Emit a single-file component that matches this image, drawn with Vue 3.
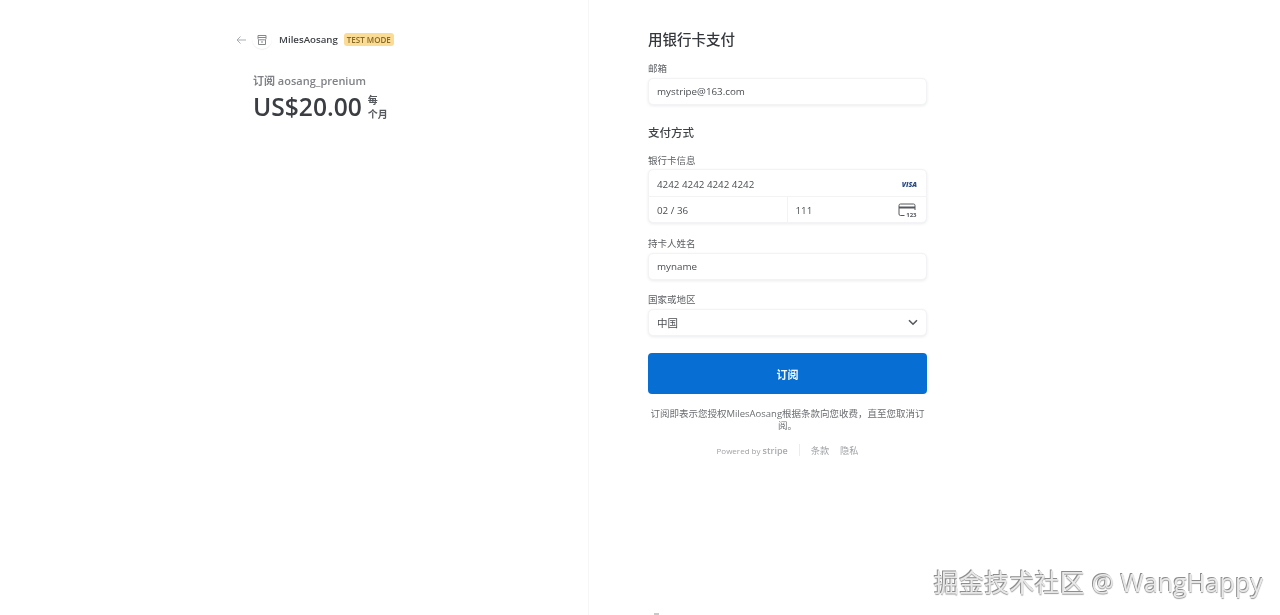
<template>
  <div class="page">
    <section class="summary">
      <header class="merchant">
        <svg class="back" width="10" height="10" viewBox="0 0 10 10" fill="none" stroke="#a9adb3" stroke-width="1">
          <path d="M10 5H1M4.500 1.500 1 5l3.500 3.500" />
        </svg>
        <div class="logo">
          <svg width="12" height="12" viewBox="0 0 12 12" fill="none" stroke="#85888d" stroke-width="1">
            <path d="M2 1.500h8v3a1.300 1.300 0 0 1-1.300 1.300H3.300A1.300 1.300 0 0 1 2 4.500z" />
            <path d="M2.500 6v4.500h7V6M2 3.500h8M5 8h2" />
          </svg>
        </div>
        <span class="merchant-name">MilesAosang</span>
        <span class="badge">TEST MODE</span>
      </header>
      <div class="product">
        <div class="product-name">订阅 aosang_prenium</div>
        <div class="price-row">
          <span class="price">US$20.00</span>
          <span class="period">每<br />个月</span>
        </div>
      </div>
    </section>

    <main class="checkout">
      <form class="form" @submit.prevent>
        <h1 class="title">用银行卡支付</h1>
        <label class="label">邮箱</label>
        <div class="field box">mystripe@163.com</div>

        <h2 class="subtitle">支付方式</h2>
        <label class="label card-label">银行卡信息</label>
        <div class="card box">
          <div class="card-row">
            <span>4242 4242 4242 4242</span>
            <span class="visa">VISA</span>
          </div>
          <div class="card-split">
            <div class="card-cell">02 / 36</div>
            <div class="card-cell cvc">
              <span>111</span>
              <svg width="19" height="15" viewBox="0 0 19 15" fill="none" stroke="#55595e" stroke-width="1">
                <path d="M8 12.500H2.500A1.500 1.500 0 0 1 1 11V2.500A1.500 1.500 0 0 1 2.500 1h13A1.500 1.500 0 0 1 17 2.500V7" />
                <path d="M1 4.500h16" stroke-width="2" />
                <rect x="6.500" y="7.500" width="12.500" height="7.500" fill="#fff" stroke="none" />
                <text x="18.500" y="14" text-anchor="end" class="cvc-num">123</text>
              </svg>
            </div>
          </div>
        </div>

        <label class="label name-label">持卡人姓名</label>
        <div class="field box">myname</div>

        <label class="label country-label">国家或地区</label>
        <div class="field box select">
          <span>中国</span>
          <svg width="10" height="7" viewBox="0 0 10 7" fill="none" stroke="#55595e" stroke-width="1.600">
            <path d="M1 1.200 5 5.200l4-4" />
          </svg>
        </div>

        <button class="submit" type="submit">订阅</button>

        <p class="terms">订阅即表示您授权MilesAosang根据条款向您收费，直至您取消订阅。</p>

        <footer class="foot">
          <span class="powered">Powered by <b>stripe</b></span>
          <span class="sep"></span>
          <span class="link">条款</span>
          <span class="link">隐私</span>
        </footer>
      </form>
    </main>

    <div class="edge-mark"></div>
    <div class="watermark">掘金技术社区 @ WangHappy</div>
  </div>
</template>

<script setup>
</script>

<style>
html, body { margin: 0; background: #fff; }
</style>

<style scoped>
.page {
  position: relative;
  display: flex;
  height: 615px;
  overflow: hidden;
  background: #fff;
  color: #3a3d42;
  font-family: "Open Sans", "Noto Sans CJK SC", sans-serif;
  filter: blur(0.3px);
}
.summary {
  box-sizing: border-box;
  width: 589px;
  padding: 31px 0 0 236px;
  border-right: 1px solid #f6f6f7;
}
.merchant { display: flex; align-items: center; height: 17px; }
.back { margin-right: 10px; }
.logo { position: relative; display: flex; width: 12px; margin-right: 11px; }
.logo::after {
  content: "";
  position: absolute;
  left: -4px;
  top: -5px;
  width: 20px;
  height: 20px;
  border-radius: 50%;
  box-shadow: 0 1px 1px rgba(30, 40, 60, 0.07);
}
.merchant-name { font-size: 9.700px; font-weight: 600; color: #3f4247; }
.badge {
  margin-left: 6px;
  padding: 0 3px;
  height: 13px;
  line-height: 13px;
  border-radius: 3px;
  background: #fbdc96;
  color: #8a6a23;
  font-size: 8px;
  font-weight: 600;
}
.product { padding: 25px 0 0 17px; }
.product-name { font-size: 11px; font-weight: 600; color: #808287; line-height: 16px; }
.price-row { display: flex; align-items: center; margin-top: 1px; }
.price { font-size: 24.600px; font-weight: 600; line-height: 34px; color: #3a3d42; }
.period { margin-left: 6px; font-size: 10px; line-height: 14px; font-weight: 600; color: #55585c; }

.checkout { padding: 30px 0 0 59px; }
.form { width: 279px; }
.title { margin: 0; font-size: 14.500px; line-height: 20px; font-weight: 500; color: #34373b; }
.subtitle { margin: 20px 0 0; font-size: 11.500px; line-height: 16px; font-weight: 500; color: #3f4247; }
.label { display: block; margin-top: 12px; margin-bottom: 3px; font-size: 9.500px; line-height: 13px; color: #5d6065; }
.card-label { margin-top: 13px; margin-bottom: 2px; }
.name-label { margin-top: 14px; }
.country-label { margin-top: 13px; }
.box {
  box-sizing: border-box;
  border: 1px solid #f3f3f5;
  border-radius: 5px;
  background: #fff;
  box-shadow: 0 1px 3px rgba(30, 40, 60, 0.09);
  font-size: 9.800px;
  color: #4b4e53;
}
.field { display: flex; align-items: center; height: 27px; padding: 0 8px; }
.select { justify-content: space-between; font-size: 10.500px; }
.card-row { box-sizing: border-box; display: flex; align-items: center; justify-content: space-between; height: 27px; padding: 2px 9px 0 8px; border-bottom: 1px solid #f3f3f5; }
.visa { font-size: 7px; font-weight: 800; font-style: italic; color: #2a4a82; }
.card-split { display: flex; height: 25px; }
.card-cell { display: flex; align-items: center; flex: 1; padding: 1px 8px 0; }
.cvc { justify-content: space-between; padding-right: 9px; border-left: 1px solid #f3f3f5; }
.cvc-num { font-size: 6px; font-weight: 700; fill: #55595e; stroke: none; }
.submit {
  display: block;
  width: 100%;
  height: 41px;
  margin-top: 17px;
  border: none;
  border-radius: 4px;
  background: #076fd3;
  color: #f3f8fd;
  font: 600 11px "Open Sans", "Noto Sans CJK SC", sans-serif;
}
.terms { margin: 14px 0 0; font-size: 9.500px; line-height: 12px; text-align: center; color: #6b6e72; }
.foot { display: flex; align-items: center; justify-content: center; gap: 11px; margin-top: 11px; font-size: 8px; color: #a0a2a6; }
.powered b { font-size: 9px; font-weight: 600; color: #a8aaae; }
.link { font-size: 9.200px; }
.sep { width: 1px; height: 12px; background: #ececee; }
.edge-mark {
  position: absolute;
  left: 654px;
  bottom: 0;
  width: 5px;
  height: 2px;
  background: #c9c9c9;
}
.watermark {
  position: absolute;
  right: 17px;
  bottom: 16px;
  font-size: 25.200px;
  color: #e8e8e8;
  text-shadow: -1px -1px 0 #8d8d8d, 0 1px 1px #9a9a9a;
  white-space: nowrap;
}
</style>
